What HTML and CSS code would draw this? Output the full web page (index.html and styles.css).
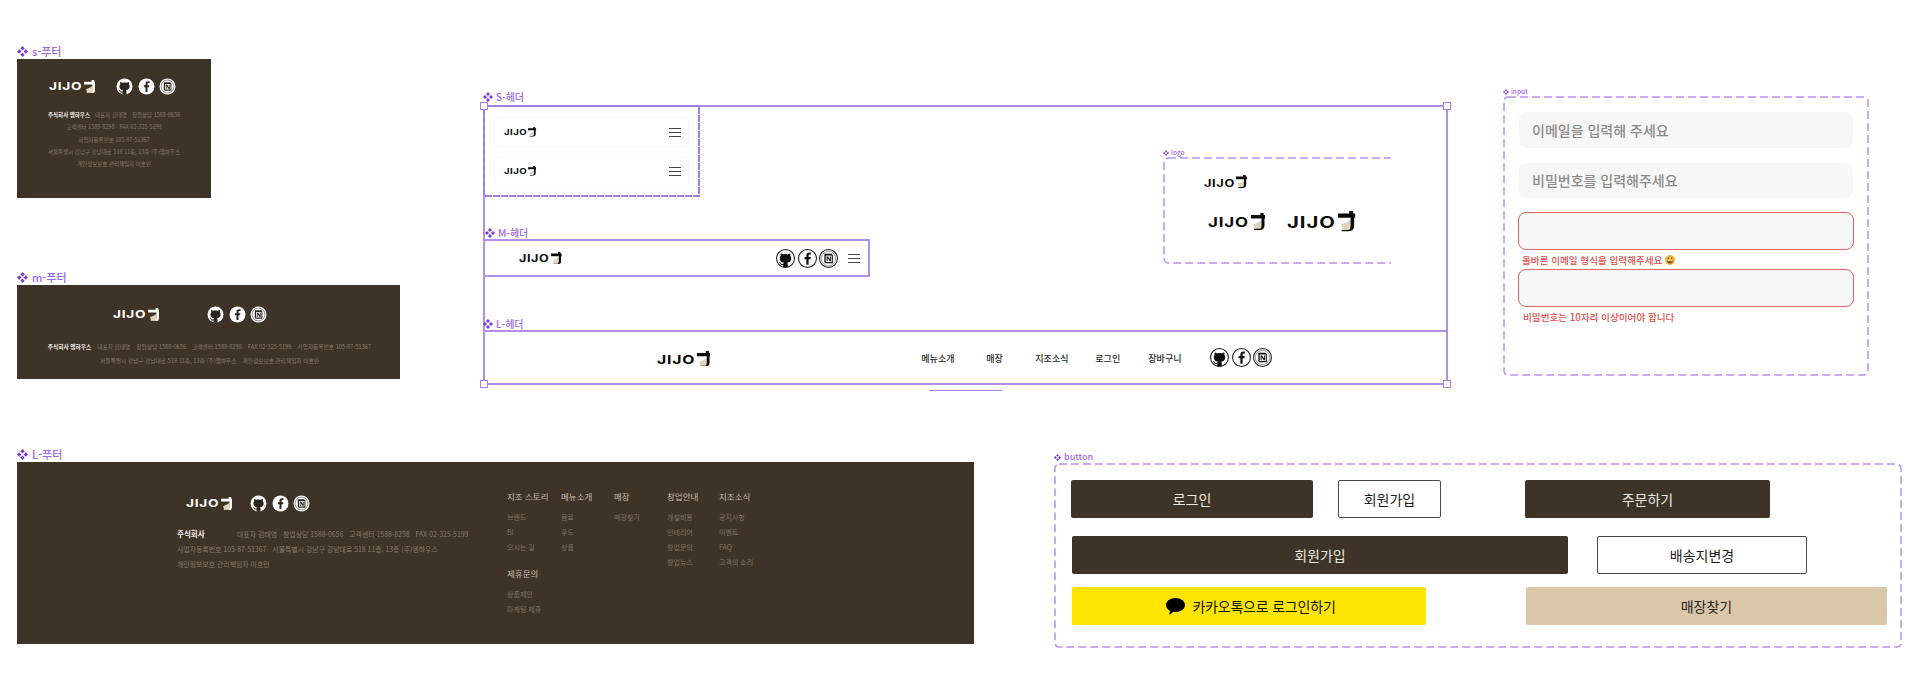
FILE: index.html
```html
<!DOCTYPE html>
<html lang="ko">
<head>
<meta charset="utf-8">
<title>JIJO components</title>
<link rel="stylesheet" href="styles.css">
</head>
<body>
<svg class="sprite" aria-hidden="true">
  <symbol id="cup" viewBox="0 0 17 20">
    <path class="cup-fill" d="M3 13C6.500 12.500 9.500 10.500 12.500 8V18.500H4.500Z"/>
    <path d="M0 2.400H11V0H14.800V2.400H17V6.500H15.800V14.500C15.800 18 13.500 20 10 20H3.500V18.500H10C11.500 18.500 12.300 17 12.300 14.500V6.500H0Z"/>
  </symbol>
  <symbol id="comp" viewBox="0 0 12 12">
    <path d="M6 0 8.400 2.400 6 4.800 3.600 2.400ZM2.400 3.600 4.800 6 2.400 8.400 0 6ZM9.600 3.600 12 6 9.600 8.400 7.200 6ZM6 7.200 8.400 9.600 6 12 3.600 9.600Z"/>
  </symbol>
  <symbol id="gh" viewBox="0 0 17 17">
    <circle class="ic-bg" cx="8.500" cy="8.500" r="8"/>
    <path class="ic-fg" transform="translate(.5 .7)" d="M5.470 15.590c.4.07.55-.17.55-.38 0-.19-.01-.82-.01-1.490-2.010.37-2.530-.49-2.690-.94-.09-.23-.48-.94-.82-1.130-.28-.15-.68-.52-.01-.53.63-.01 1.080.58 1.230.82.72 1.210 1.870.87 2.330.66.07-.52.28-.87.51-1.070-1.780-.2-3.640-.89-3.640-3.950 0-.87.31-1.590.82-2.150-.08-.2-.36-1.020.08-2.120 0 0 .67-.21 2.200.82.64-.18 1.320-.27 2-.27.68 0 1.360.09 2 .27 1.530-1.040 2.200-.82 2.200-.82.44 1.100.16 1.920.08 2.120.51.56.82 1.270.82 2.150 0 3.070-1.870 3.750-3.650 3.950.29.25.54.73.54 1.480 0 1.070-.01 1.930-.01 2.200 0 .21.15.46.55.38Q8 16.400 5.470 15.590Z"/>
  </symbol>
  <symbol id="fb" viewBox="0 0 17 17">
    <circle class="ic-bg" cx="8.500" cy="8.500" r="8"/>
    <path class="ic-fg" d="M9.500 14V9.200h1.600l.3-2H9.500V6c0-.6.2-1 1-1h1V3.300c-.2 0-.8-.1-1.500-.1-1.500 0-2.500.9-2.500 2.600v1.400H5.900v2h1.600V14Z"/>
  </symbol>
  <symbol id="no" viewBox="0 0 17 17">
    <circle class="ic-bg" cx="8.500" cy="8.500" r="8"/>
    <circle class="ic-ring" cx="8.500" cy="8.500" r="6.400"/>
    <path class="ic-fg" fill-rule="evenodd" d="M4.800 4.300H11.300L12.400 5.400V12.700H5.700L4.800 11.800ZM6 5.300V11.600H11.400V5.900H6ZM6.800 6.600H8.100L9.900 9.300V6.600H10.700V10.900H9.600L7.700 8V10.900H6.800Z"/>
  </symbol>
  <symbol id="menu" viewBox="0 0 12 9">
    <path d="M0 .5H12M0 4.500H12M0 8.500H12"/>
  </symbol>
</svg>

<main class="canvas">

  <section class="frame foot foot-s">
    <h2 class="label"><svg class="comp"><use href="#comp"/></svg>s-푸터</h2>
    <div class="foot-s-top">
      <div class="logo logo-46"><span>JIJO</span><svg class="cup"><use href="#cup"/></svg></div>
      <div class="icons icons-m solid">
        <svg><use href="#gh"/></svg><svg><use href="#fb"/></svg><svg><use href="#no"/></svg>
      </div>
    </div>
    <div class="info info-s">
      <p><b>주식회사 엠하우스</b><span>대표자 김태영</span><span>창업상담 1588-0656</span></p>
      <p><span>고객센터 1588-8298</span><span>FAX 02-325-5199</span></p>
      <p><span>사업자등록번호 105-87-51367</span></p>
      <p><span>서울특별시 강남구 강남대로 518 11층, 13층 (주)엠하우스</span></p>
      <p><span>개인정보보호 관리책임자 이호민</span></p>
    </div>
  </section>

  <section class="frame foot foot-m">
    <h2 class="label"><svg class="comp"><use href="#comp"/></svg>m-푸터</h2>
    <div class="foot-m-top">
      <div class="logo logo-46"><span>JIJO</span><svg class="cup"><use href="#cup"/></svg></div>
      <div class="icons icons-m solid">
        <svg><use href="#gh"/></svg><svg><use href="#fb"/></svg><svg><use href="#no"/></svg>
      </div>
    </div>
    <div class="info info-m">
      <p><b>주식회사 엠하우스</b><span>대표자 김태영</span><span>창업상담 1588-0656</span><span>고객센터 1588-8298</span><span>FAX 02-325-5199</span><span>사업자등록번호 105-87-51367</span></p>
      <p><span>서울특별시 강남구 강남대로 518 11층, 13층 (주)엠하우스</span><span>개인정보보호 관리책임자 이호민</span></p>
    </div>
  </section>

  <section class="frame foot foot-l">
    <h2 class="label"><svg class="comp"><use href="#comp"/></svg>L-푸터</h2>
    <div class="foot-l-left">
      <div class="foot-l-top">
        <div class="logo logo-46"><span>JIJO</span><svg class="cup"><use href="#cup"/></svg></div>
        <div class="icons icons-m solid">
          <svg><use href="#gh"/></svg><svg><use href="#fb"/></svg><svg><use href="#no"/></svg>
        </div>
      </div>
      <div class="info info-l">
        <p><b>주식회사</b><span>대표자 김태영</span><span>창업상담 1588-0656</span><span>고객센터 1588-8298</span><span>FAX 02-325-5199</span></p>
        <p><span>사업자등록번호 105-87-51367</span><span>서울특별시 강남구 강남대로 518 11층, 13층 (주)엠하우스</span></p>
        <p><span>개인정보보호 관리책임자 이호민</span></p>
      </div>
    </div>
    <div class="foot-cols">
      <div class="col">
        <h3>지조 스토리</h3>
        <a>브랜드</a><a>BI</a><a>오시는 길</a>
        <h3 class="col-gap">제휴문의</h3>
        <a>상품제안</a><a>마케팅 제휴</a>
      </div>
      <div class="col"><h3>메뉴소개</h3><a>음료</a><a>푸드</a><a>상품</a></div>
      <div class="col"><h3>매장</h3><a>매장찾기</a></div>
      <div class="col"><h3>창업안내</h3><a>개설비용</a><a>인테리어</a><a>창업문의</a><a>창업뉴스</a></div>
      <div class="col"><h3>지조소식</h3><a>공지사항</a><a>이벤트</a><a>FAQ</a><a>고객의 소리</a></div>
    </div>
  </section>

  <section class="select">
    <span class="handle h-tl"></span><span class="handle h-tr"></span><span class="handle h-bl"></span><span class="handle h-br"></span>
    <div class="s-head">
      <svg class="dash dash-fine"><rect/></svg>
      <h2 class="label label-sm"><svg class="comp"><use href="#comp"/></svg>S-헤더</h2>
      <div class="s-card">
        <div class="logo logo-32"><span>JIJO</span><svg class="cup"><use href="#cup"/></svg></div>
        <svg class="menu"><use href="#menu"/></svg>
      </div>
      <div class="s-card">
        <div class="logo logo-32"><span>JIJO</span><svg class="cup"><use href="#cup"/></svg></div>
        <svg class="menu"><use href="#menu"/></svg>
      </div>
    </div>
    <div class="m-head">
      <h2 class="label label-sm"><svg class="comp"><use href="#comp"/></svg>M-헤더</h2>
      <div class="logo logo-42"><span>JIJO</span><svg class="cup"><use href="#cup"/></svg></div>
      <div class="icons icons-h line">
        <svg><use href="#gh"/></svg><svg><use href="#fb"/></svg><svg><use href="#no"/></svg>
      </div>
      <svg class="menu"><use href="#menu"/></svg>
    </div>
    <div class="l-head">
      <h2 class="label label-sm"><svg class="comp"><use href="#comp"/></svg>L-헤더</h2>
      <div class="logo logo-53"><span>JIJO</span><svg class="cup"><use href="#cup"/></svg></div>
      <nav class="nav"><a>메뉴소개</a><a>매장</a><a>지조소식</a><a>로그인</a><a>장바구니</a></nav>
      <div class="icons icons-h line">
        <svg><use href="#gh"/></svg><svg><use href="#fb"/></svg><svg><use href="#no"/></svg>
      </div>
    </div>
    <span class="under"></span>

    <div class="logo-frame">
      <svg class="dash"><rect class="dash-open"/></svg>
      <h2 class="label label-xs"><svg class="comp"><use href="#comp"/></svg>logo</h2>
      <div class="logo logo-43"><span>JIJO</span><svg class="cup"><use href="#cup"/></svg></div>
      <div class="lf-row">
        <div class="logo logo-57"><span>JIJO</span><svg class="cup"><use href="#cup"/></svg></div>
        <div class="logo logo-68"><span>JIJO</span><svg class="cup"><use href="#cup"/></svg></div>
      </div>
    </div>
  </section>

  <section class="frame input-frame">
    <svg class="dash"><rect/></svg>
    <h2 class="label label-xs"><svg class="comp"><use href="#comp"/></svg>input</h2>
    <div class="field">이메일을 입력해 주세요</div>
    <div class="field field-2">비밀번호를 입력해주세요</div>
    <div class="field field-err"></div>
    <p class="err">올바른 이메일 형식을 입력해주세요
      <svg class="emoji" viewBox="0 0 10 10"><circle cx="5" cy="5" r="5" fill="#f2b632"/><path d="M2 5.200H8C8 7.400 6.600 8.500 5 8.500S2 7.400 2 5.200Z" fill="#7a4a1c"/><path d="M2.500 5.300H7.500V6.200H2.500Z" fill="#fff"/><circle cx="3.200" cy="3.300" r=".7" fill="#6b4218"/><circle cx="6.800" cy="3.300" r=".7" fill="#6b4218"/></svg>
    </p>
    <div class="field field-err"></div>
    <p class="err err-2">비밀번호는 10자리 이상이어야 합니다</p>
  </section>

  <section class="frame btn-frame">
    <svg class="dash"><rect/></svg>
    <h2 class="label label-xs label-btn"><svg class="comp"><use href="#comp"/></svg>button</h2>
    <div class="btn-row row-1">
      <button class="btn dark w-login">로그인</button>
      <button class="btn line-btn w-join">회원가입</button>
      <button class="btn dark w-order">주문하기</button>
    </div>
    <div class="btn-row row-2">
      <button class="btn dark w-joinl">회원가입</button>
      <button class="btn line-btn w-addr">배송지변경</button>
    </div>
    <div class="btn-row row-3">
      <button class="btn kakao w-kakao">
        <svg class="talk" viewBox="0 0 19 17"><path d="M9.500 0C14.700 0 19 3.100 19 7C19 10.900 14.700 14 9.500 14C8.800 14 8.100 13.900 7.500 13.800L3.800 16.600C3.400 16.800 3.200 16.600 3.300 16.200L4 12.800C1.600 11.500 0 9.400 0 7C0 3.100 4.300 0 9.500 0Z"/></svg>
        카카오톡으로 로그인하기
      </button>
      <button class="btn tan w-store">매장찾기</button>
    </div>
  </section>

</main>
</body>
</html>
```

FILE: styles.css
```css
* { box-sizing: border-box; }
html, body { margin: 0; padding: 0; background: #fff; }
body {
  width: 1921px;
  height: 694px;
  overflow: hidden;
  font-family: "Noto Sans CJK KR", "Noto Sans", sans-serif;
  color: #222;
}
p, h2, h3 { margin: 0; font-weight: inherit; }
a { display: block; }
.sprite { position: absolute; width: 0; height: 0; }
.canvas { position: relative; width: 1921px; height: 694px; }

/* Free canvas: each frame is placed at its spot on the design board */
.frame { position: absolute; }
.foot-s { left: 17px; top: 59px; width: 194px; height: 139px; }
.foot-m { left: 17px; top: 285px; width: 383px; height: 94px; }
.foot-l { left: 17px; top: 462px; width: 957px; height: 182px; }
.input-frame { left: 1503px; top: 96px; width: 366px; height: 280px; }
.btn-frame { left: 1054px; top: 463px; width: 848px; height: 185px; }

/* Frame labels */
.label {
  position: absolute;
  left: 0;
  bottom: 100%;
  display: flex;
  align-items: center;
  gap: 4px;
  padding-bottom: 1px;
  font-size: 11px;
  line-height: 14px;
  font-weight: 500;
  color: #9a6be6;
  white-space: nowrap;
}
.comp { width: 11px; height: 11px; fill: #7a3dd8; flex: none; }
.label-sm { font-size: 10px; padding-bottom: 1px; left: 0; gap: 3px; }
.label-sm .comp { width: 10px; height: 10px; }
.label-xs { font-size: 6.5px; line-height: 9px; gap: 2px; left: 0; padding-bottom: 0; }
.label-xs .comp { width: 6px; height: 6px; }
.label-btn { font-size: 9px; line-height: 12px; left: 0; gap: 3px; }
.label-btn .comp { width: 7px; height: 7px; }

/* Logo */
.logo { display: flex; align-items: center; gap: .34em; font-family: "Inter", sans-serif; font-weight: 700; color: #0a0a0a; line-height: 1; flex: none; }
.logo span { display: block; width: 2.9em; margin-top: .22em; letter-spacing: .05em; white-space: nowrap; transform: scaleX(1.28); transform-origin: left center; }
.cup { width: 1.1em; height: 1.3em; fill: currentColor; flex: none; }
.cup-fill { fill: #e2d3bc; }
.logo-32 { font-size: 7.5px; }
.logo-42 { font-size: 9.8px; }
.logo-43 { font-size: 10px; }
.logo-46 { font-size: 10.7px; color: #fff; }
.logo-53 { font-size: 12.3px; }
.logo-57 { font-size: 13.2px; }
.logo-68 { font-size: 15.8px; }

/* Social icons */
.icons { display: flex; flex: none; }
.icons svg { display: block; }
.icons-m { gap: 4.5px; }
.icons-m svg { width: 17px; height: 17px; }
.icons-h { gap: 2.5px; }
.icons-h svg { width: 19px; height: 19px; }
.ic-bg { fill: var(--ic-bg); stroke: var(--ic-line); stroke-width: var(--ic-line-w); }
.ic-fg { fill: var(--ic-fg); }
.ic-ring { fill: none; stroke: var(--ic-ring); stroke-width: .5; }
.solid { --ic-bg: #fff; --ic-fg: #2d251c; --ic-ring: #2d251c; --ic-line: none; --ic-line-w: 0; }
.line { --ic-bg: #fff; --ic-fg: #111; --ic-ring: #555; --ic-line: #111; --ic-line-w: .9; }

/* Hamburger */
.menu { width: 12px; height: 9px; fill: none; stroke: #444; stroke-width: 1; flex: none; }

/* Footers */
.foot { background: #3e3327; color: #857c6c; }
.info b { color: #f2efe9; font-weight: 700; }
.info span, .info p { white-space: nowrap; }

.foot-s-top { display: flex; align-items: center; padding: 19px 0 0 32px; gap: 21px; }
.info-s { padding-top: 14px; font-size: 5.5px; line-height: 12.3px; text-align: center; }
.info-s span { margin-left: 5px; }
.info-s p:nth-child(n+2) span:first-child { margin-left: 0; }

.foot-m-top { display: flex; align-items: center; padding: 21px 0 0 96px; gap: 48px; }
.info-m { padding: 17px 0 0 2px; font-size: 5.7px; line-height: 14px; text-align: center; }
.info-m span { margin-left: 6px; }
.info-m p + p span:first-child { margin-left: 0; }

.foot-l { display: flex; }
.foot-l-left { width: 330px; margin-left: 160px; flex: none; }
.foot-l-top { display: flex; align-items: center; padding: 33px 0 0 9px; gap: 18px; }
.info-l { padding-top: 14px; font-size: 6.9px; line-height: 15px; }
.info-l b { display: inline-block; width: 60px; font-size: 7.5px; }
.info-l span { margin-right: 6px; }

.foot-cols { display: grid; grid-template-columns: 54px 53px 53px 52px 60px; padding-top: 29px; }
.col h3 { font-size: 8.5px; line-height: 10px; color: #c5bdae; font-weight: 400; margin-bottom: 8.5px; white-space: nowrap; }
.col a { font-size: 7px; line-height: 15px; color: #7d7466; white-space: nowrap; }
.col .col-gap { margin-top: 13.5px; }

/* Header selection group */
.select {
  position: absolute;
  left: 483px;
  top: 105px;
  width: 965px;
  height: 280px;
  display: flex;
  flex-direction: column;
  align-items: flex-start;
  box-shadow: inset 0 0 0 2px #b08eea;
}
.handle { position: absolute; width: 8px; height: 8px; background: #fff; border: 1.5px solid #a77fe8; z-index: 2; }
.h-tl { left: -3px; top: -3px; }
.h-tr { right: -3px; top: -3px; }
.h-bl { left: -3px; bottom: -3px; }
.h-br { right: -3px; bottom: -3px; }
.under { position: absolute; left: 446px; top: 285px; width: 73px; height: 1px; background: #a77fe8; }

.s-head {
  position: relative;
  width: 217px;
  height: 92px;
  padding: 12px 11px 0;
  display: flex;
  flex-direction: column;
  gap: 9px;
}
.s-card {
  height: 30px;
  padding: 0 7px 0 9px;
  display: flex;
  align-items: center;
  justify-content: space-between;
  border: 1px solid #f6f6f6;
  border-radius: 4px;
}
.m-head {
  position: relative;
  width: 387px;
  height: 38px;
  margin-top: 42px;
  display: flex;
  align-items: center;
  padding: 0 8px 0 34px;
  border: 2px solid #b08eea;
}
.m-head .icons { margin-left: auto; }
.m-head .menu { margin-left: 10px; }
.l-head {
  position: relative;
  width: 100%;
  height: 55px;
  margin-top: auto;
  display: flex;
  align-items: center;
  padding-left: 174px;
  border-top: 2px solid #b08eea;
}
.l-head .icons { margin-top: -3px; }
.nav {
  display: grid;
  grid-template-columns: 65px 49px 60px 53px 62px;
  margin-left: 211px;
  font-size: 9px;
  line-height: 12px;
  font-weight: 500;
  color: #2a2a2a;
  white-space: nowrap;
}

/* Logo frame */
.logo-frame {
  position: absolute;
  left: 680px;
  top: 52px;
  width: 228px;
  height: 107px;
  padding: 18px 0 0 41px;
}
.lf-row { display: flex; align-items: center; gap: 22px; margin: 23px 0 0 4px; }

/* Dashed outlines */
.dash { position: absolute; inset: 0; width: 100%; height: 100%; pointer-events: none; }
.dash rect {
  x: 1px;
  y: 1px;
  width: calc(100% - 2px);
  height: calc(100% - 2px);
  rx: 4px;
  fill: none;
  stroke: #b593ee;
  stroke-width: 1.5px;
  stroke-dasharray: 8 4;
}
.dash .dash-open { width: calc(100% + 20px); }
.dash-fine rect { rx: 0; stroke: #a67de8; stroke-width: 2px; stroke-dasharray: 7 1; }

/* Inputs */
.input-frame { padding: 16px 16px 0; }
.field {
  position: relative;
  height: 36px;
  padding-left: 13px;
  border-radius: 8px;
  background: #f7f7f7;
  color: #8b8b8b;
  font-size: 14px;
  line-height: 36px;
  font-weight: 500;
}
.field-2 { margin-top: 15px; height: 35px; line-height: 35px; }
.field-err { height: 38px; margin: 14px -1px 0; border: 1.5px solid #e06464; border-radius: 8px; }
.err + .field-err { margin-top: 0; }
.err {
  position: relative;
  display: flex;
  align-items: center;
  gap: 3px;
  height: 19px;
  padding: 1px 0 0 3px;
  color: #e05050;
  font-size: 9.6px;
  line-height: 18px;
  font-weight: 500;
}
.err-2 { padding-left: 4px; }
.emoji { width: 10px; height: 10px; flex: none; }

/* Buttons */
.btn-frame { padding: 17px 0 0 17px; display: flex; flex-direction: column; }
.btn-row { position: relative; display: flex; height: 38px; }
.row-2 { margin-top: 18px; }
.row-3 { margin-top: 13px; }
.btn {
  display: flex;
  align-items: center;
  justify-content: center;
  height: 38px;
  padding: 0;
  border: 0;
  border-radius: 2px;
  font-family: inherit;
  font-size: 14px;
  font-weight: 400;
  color: #1c1c1c;
}
.dark { background: #3e3327; color: #ece8df; }
.line-btn { background: #fff; border: 1.5px solid #4a4a4a; }
.kakao { background: #fee500; color: #111; gap: 7px; padding-left: 4px; letter-spacing: -.2px; }
.tan { background: #dac7aa; color: #2a2520; }
.w-login { width: 242px; }
.w-join { width: 103px; margin-left: 25px; }
.w-order { width: 245px; margin-left: 84px; }
.w-joinl { width: 496px; margin-left: 1px; }
.w-addr { width: 210px; margin-left: 29px; }
.w-kakao { width: 354px; margin-left: 1px; }
.w-store { width: 361px; margin-left: 100px; }
.talk { width: 19px; height: 17px; fill: #000; flex: none; }
```
